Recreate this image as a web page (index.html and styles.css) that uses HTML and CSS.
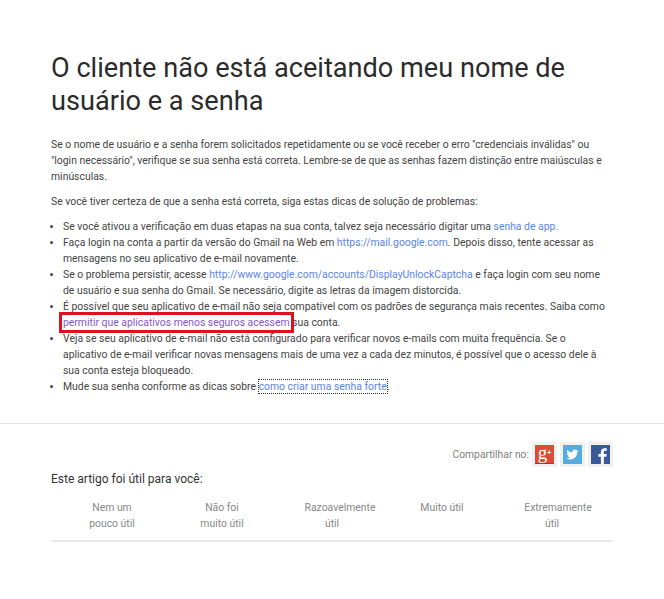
FILE: index.html
```html
<!DOCTYPE html>
<html lang="pt">
<head>
<meta charset="utf-8">
<title>O cliente não está aceitando meu nome de usuário e a senha</title>
<link rel="stylesheet" href="styles.css">
</head>
<body>
<main class="article">
  <h1 class="title">O cliente não está aceitando meu nome de usuário e a senha</h1>
  <p class="para">Se o nome de usuário e a senha forem solicitados repetidamente ou se você receber o erro "credenciais inválidas" ou "login necessário", verifique se sua senha está correta. Lembre-se de que as senhas fazem distinção entre maiúsculas e minúsculas.</p>
  <p class="para">Se você tiver certeza de que a senha está correta, siga estas dicas de solução de problemas:</p>
  <ul class="tips">
    <li>Se você ativou a verificação em duas etapas na sua conta, talvez seja necessário digitar uma <a class="link" href="#">senha de app</a><span class="link">.</span></li>
    <li>Faça login na conta a partir da versão do Gmail na Web em <a class="link" href="#">https://mail.google.com</a>. Depois disso, tente acessar as mensagens no seu aplicativo de e-mail novamente.</li>
    <li>Se o problema persistir, acesse <a class="link" href="#">http://www.google.com/accounts/DisplayUnlockCaptcha</a> e faça login com seu nome de usuário e sua senha do Gmail. Se necessário, digite as letras da imagem distorcida.</li>
    <li>É possível que seu aplicativo de e-mail não seja compatível com os padrões de segurança mais recentes. Saiba como <a class="link visited" href="#">permitir que aplicativos menos seguros acessem</a> sua conta.</li>
    <li>Veja se seu aplicativo de e-mail não está configurado para verificar novos e-mails com muita frequência. Se o aplicativo de e-mail verificar novas mensagens mais de uma vez a cada dez minutos, é possível que o acesso dele à sua conta esteja bloqueado.</li>
    <li>Mude sua senha conforme as dicas sobre <a class="link focused" href="#">como criar uma senha forte</a>.</li>
  </ul>
</main>
<footer class="foot">
  <div class="share">
    <span class="share-label">Compartilhar no:</span>
    <a class="tile" href="#" aria-label="Google+"><span class="ico gplus">g<sup class="plus">+</sup></span></a>
    <a class="tile" href="#" aria-label="Twitter"><span class="ico twitter"><svg viewBox="0 0 24 24" width="13" height="13"><path fill="#fff" d="M23 4.900c-.8.400-1.700.600-2.600.700.900-.600 1.600-1.400 2-2.500-.900.500-1.900.900-2.900 1.100a4.600 4.600 0 0 0-7.800 4.200A13 13 0 0 1 2.300 3.600a4.600 4.600 0 0 0 1.400 6.100c-.700 0-1.400-.200-2.100-.600 0 2.300 1.600 4.200 3.700 4.600-.700.200-1.400.200-2.100.100.600 1.900 2.300 3.200 4.300 3.200A9.200 9.200 0 0 1 .7 18.900 13 13 0 0 0 20.700 7.300c.900-.600 1.700-1.400 2.300-2.400z"/></svg></span></a>
    <a class="tile" href="#" aria-label="Facebook"><span class="ico facebook"><svg viewBox="0 0 20 20" width="19" height="19"><path fill="#fff" d="M13.500 20v-7.600h2.600l.4-3h-3V7.500c0-.9.300-1.400 1.500-1.400h1.600V3.400c-.3 0-1.200-.1-2.300-.1-2.300 0-3.900 1.400-3.900 4v2.100H7.800v3h2.600V20z"/></svg></span></a>
  </div>
  <h2 class="ask">Este artigo foi útil para você:</h2>
  <div class="ratings">
    <span class="rate">Nem um<br>pouco útil</span>
    <span class="rate">Não foi<br>muito útil</span>
    <span class="rate"><span class="nudge-wide">Razoavelmente</span><br>útil</span>
    <span class="rate">Muito útil</span>
    <span class="rate"><span class="nudge">Extremamente</span><br>útil</span>
  </div>
</footer>
</body>
</html>
```
FILE: styles.css
```css
* { box-sizing: border-box; }
html, body { margin: 0; padding: 0; background: #fff; }
body {
  width: 664px;
  height: 599px;
  overflow: hidden;
  font-family: Roboto, "Liberation Sans", sans-serif;
  color: #444;
}
.article { padding: 52px 50px 0 51px; }
.title {
  margin: 0 0 19px;
  font-size: 27.15px;
  font-weight: 400;
  line-height: 33px;
  color: #2b2b2b;
}
.para {
  margin: 0 0 9px;
  font-size: 10.4px;
  line-height: 16px;
}
.tips {
  margin: 0;
  padding: 0 7px 0 12px;
  font-size: 10.4px;
  line-height: 16px;
}
.tips li::marker { font-size: 10px; }
.link { color: #5a85ef; text-decoration: none; }
.visited {
  color: #8457c8;
  outline: 3px solid #e0101e;
  outline-offset: 1px;
}
.focused { outline: 1px dotted #333; }
.foot {
  margin-top: 28px;
  border-top: 1px solid #e4e4e4;
  padding: 18px 51px 0 51px;
}
.share {
  display: flex;
  justify-content: flex-end;
  align-items: center;
  gap: 3px;
  color: #808080;
  font-size: 10.3px;
}
.tile {
  display: flex;
  align-items: center;
  justify-content: center;
  width: 25px;
  height: 25px;
  background: #f1f1f1;
  text-decoration: none;
}
.ico {
  display: flex;
  align-items: center;
  justify-content: center;
  width: 19px;
  height: 19px;
  color: #fff;
}
.gplus {
  background: #dd4b39;
  border-bottom: 1px solid #a83a2c;
  font: 400 19px/19px "Liberation Serif", serif;
  padding-bottom: 4px;
}
.plus { font: 700 7px/1 "Liberation Sans", sans-serif; vertical-align: 5px; }
.twitter { background: #55acdf; }
.facebook { background: #3b5998; align-items: flex-end; overflow: hidden; }
.ask {
  margin: 3px 0 0;
  font-size: 12px;
  font-weight: 400;
  line-height: 18px;
  color: #333;
}
.ratings {
  display: grid;
  grid-template-columns: repeat(5, 110px);
  margin-top: 12px;
  padding: 0 0 8px 6px;
  border-bottom: 2px solid #e8e8e8;
}
.rate {
  text-align: center;
  font-size: 10.4px;
  line-height: 16px;
  color: #888;
}
.nudge-wide { padding-left: 16px; }
.nudge { padding-left: 12px; }
```
